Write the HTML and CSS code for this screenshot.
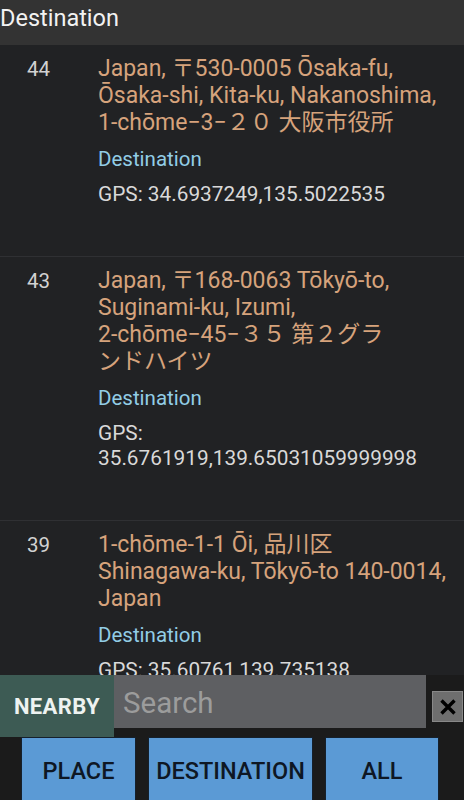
FILE: index.html
```html
<!DOCTYPE html>
<html lang="ja">
<head>
<meta charset="utf-8">
<title>Destination</title>
<link rel="stylesheet" href="styles.css">
</head>
<body>
<div class="app">
  <header class="appbar">Destination</header>
  <main class="list">
    <div class="item">
      <div class="num">44</div>
      <div class="content">
        <div class="addr">Japan, <span class="nw">〒530-0005</span> <span class="nw">Ōsaka-fu,</span> <span class="nw">Ōsaka-shi,</span> <span class="nw">Kita-ku,</span> Nakanoshima, <span class="nw">1-chōme−3−２０</span> 大阪市役所</div>
        <div class="type">Destination</div>
        <div class="gps">GPS: 34.6937249,135.5022535</div>
      </div>
    </div>
    <div class="item">
      <div class="num">43</div>
      <div class="content">
        <div class="addr">Japan, <span class="nw">〒168-0063</span> <span class="nw">Tōkyō-to,</span> <span class="nw">Suginami-ku,</span> Izumi, <span class="nw">2-chōme−45−３５</span> 第２グラ<br>ンドハイツ</div>
        <div class="type">Destination</div>
        <div class="gps">GPS: 35.6761919,139.65031059999998</div>
      </div>
    </div>
    <div class="item">
      <div class="num">39</div>
      <div class="content">
        <div class="addr"><span class="nw">1-chōme-1-1</span> Ōi, 品川区 <span class="nw">Shinagawa-ku,</span> <span class="nw">Tōkyō-to</span> <span class="nw">140-0014,</span> Japan</div>
        <div class="type">Destination</div>
        <div class="gps">GPS: 35.60761,139.735138</div>
      </div>
    </div>
  </main>
  <footer class="panel">
    <div class="toprow">
      <div class="nearby">NEARBY</div>
      <div class="search">Search</div>
      <div class="close">
        <svg width="18" height="18" viewBox="0 0 18 18"><path d="M2.5 2.5 L15.5 15.5 M15.5 2.5 L2.5 15.5" stroke="#000" stroke-width="3.4"/></svg>
      </div>
    </div>
    <div class="btnrow">
      <div class="btn place">PLACE</div>
      <div class="btn dest">DESTINATION</div>
      <div class="btn all">ALL</div>
    </div>
  </footer>
</div>
</body>
</html>
```
FILE: styles.css
```css
html, body {
  margin: 0;
  padding: 0;
  background: #212224;
}
.app {
  width: 464px;
  height: 800px;
  display: flex;
  flex-direction: column;
  overflow: hidden;
  font-family: Roboto, "Noto Sans CJK JP", sans-serif;
}
.appbar {
  height: 45px;
  box-sizing: border-box;
  padding-top: 5px;
  background: #333333;
  color: #f2f2f2;
  font-size: 23.5px;
  line-height: 27px;
  flex: none;
}
.list {
  flex: 1;
  overflow: hidden;
  background: #212224;
}
.item {
  display: flex;
  padding: 10px 6px 49px 27px;
  border-bottom: 1px solid #2f3033;
}
.num {
  width: 71px;
  flex: none;
  color: #d2d2d2;
  font-size: 20.5px;
  line-height: 27px;
  padding-top: 1px;
}
.content {
  flex: 1;
  min-width: 0;
}
.nw {
  white-space: nowrap;
}
.addr {
  color: #d6a37c;
  font-size: 23px;
  line-height: 27px;
}
.type {
  color: #92cde6;
  font-size: 20.5px;
  line-height: 27px;
  margin-top: 10px;
}
.gps {
  color: #d9d9d9;
  font-size: 20.8px;
  line-height: 25px;
  margin-top: 9px;
}
.panel {
  flex: none;
  height: 125px;
  background: #1b1b1b;
  display: flex;
  flex-direction: column;
  overflow: hidden;
}
.toprow {
  display: flex;
  height: 62px;
  flex: none;
}
.nearby {
  width: 114px;
  background: #3d5b54;
  color: #eef3f1;
  font-size: 22px;
  font-weight: 700;
  letter-spacing: 0.4px;
  display: flex;
  align-items: center;
  justify-content: center;
}
.search {
  width: 312px;
  height: 53px;
  box-sizing: border-box;
  padding-left: 9px;
  background: #5e5f62;
  color: #9c9c9c;
  font-size: 29.5px;
  line-height: 56px;
}
.close {
  width: 31px;
  height: 31px;
  box-sizing: border-box;
  margin: 16px 0 0 6px;
  background: #6e6e6e;
  border: 1px solid #888888;
  display: flex;
  align-items: center;
  justify-content: center;
}
.btnrow {
  display: flex;
  padding-left: 21px;
  gap: 12px;
}
.btn {
  height: 66px;
  box-sizing: border-box;
  background: #5b9ad5;
  border: 1px solid #15202c;
  border-bottom: none;
  color: #0e1724;
  font-size: 23.5px;
  font-weight: 500;
  display: flex;
  align-items: center;
  justify-content: center;
}
.place { width: 115px; }
.dest { width: 165px; }
.all { width: 114px; }
```
